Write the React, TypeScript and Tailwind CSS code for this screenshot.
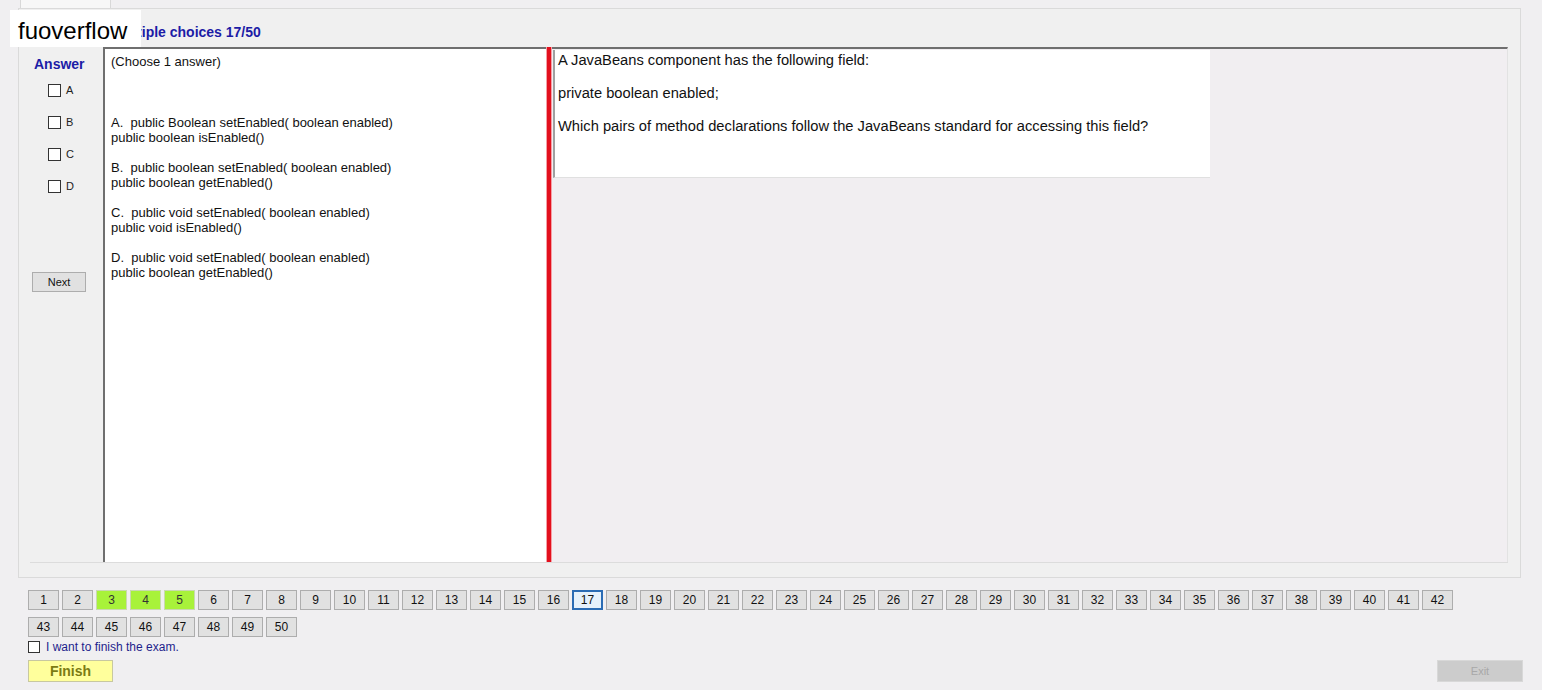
import React from "react";

const greens = [3, 4, 5];
const current = 17;

const options = [
  ["A.  public Boolean setEnabled( boolean enabled)", "public boolean isEnabled()"],
  ["B.  public boolean setEnabled( boolean enabled)", "public boolean getEnabled()"],
  ["C.  public void setEnabled( boolean enabled)", "public void isEnabled()"],
  ["D.  public void setEnabled( boolean enabled)", "public boolean getEnabled()"],
];

const QButton = ({ n }: { n: number }) => {
  let cls = "bg-[#e1e1e1] border-[#adadad] text-[#111]";
  if (greens.includes(n)) cls = "bg-[#a8f23a] border-[#c9d9b0] text-[#333]";
  if (n === current) cls = "bg-[#e5f1fb] border-[#2a6cb4] border-2 text-[#111]";
  return (
    <div className={`w-[31px] h-[20px] flex items-center justify-center border text-[12px] ${cls}`}>
      {n}
    </div>
  );
};

export default function App() {
  return (
    <div className="relative w-full h-[690px] bg-[#f0eff1] overflow-hidden text-[#111]" style={{ fontFamily: '"Liberation Sans", Arial, sans-serif' }}>
      {/* tab strip */}
      <div className="h-[8px] flex">
        <div className="ml-[20px] w-[91px] h-[8px] border-x border-[#d8d8d8] bg-[#f7f7f7]" />
      </div>

      {/* main panel */}
      <div className="ml-[18px] mr-[21px] h-[570px] border border-[#dadada] bg-[#f0f0f0] flex flex-col">
        <div className="h-[38px] pl-[94px] pt-[13px] text-[14px] font-bold text-[#1c1ca6]">Multiple choices 17/50</div>
        <div className="ml-[11px] mr-[12px] h-[516px] flex border-b border-[#dcdcdc]">
          {/* answer column */}
          <div className="w-[73px] flex flex-col pt-[7px]">
            <div className="ml-[4px] text-[14px] font-bold text-[#1c1ca6]">Answer</div>
            <div className="flex flex-col gap-[19px] mt-[9px] ml-[18px]">
              {["A", "B", "C", "D"].map((l) => (
                <div key={l} className="flex items-center gap-[5px] h-[13px]">
                  <div className="w-[13px] h-[13px] border border-[#333] bg-white" />
                  <span className="text-[11px] text-[#222]">{l}</span>
                </div>
              ))}
            </div>
            <div className="mt-[79px] ml-[2px] w-[54px] h-[20px] border border-[#adadad] bg-[#e1e1e1] flex items-center justify-center text-[11px]">
              Next
            </div>
          </div>

          {/* options panel */}
          <div className="w-[443px] bg-white border-l-2 border-t-2 border-[#6f6f6f] pl-[6px] pt-[5px] text-[13px] leading-[15px]">
            <div>(Choose 1 answer)</div>
            <div className="mt-[46px] flex flex-col gap-[15px]">
              {options.map((o) => (
                <div key={o[0]}>
                  <div className="whitespace-pre">{o[0]}</div>
                  <div>{o[1]}</div>
                </div>
              ))}
            </div>
          </div>

          {/* splitter */}
          <div className="w-[6px] bg-[#e3101d] border-x border-[#f4a0a6]" />

          {/* question area */}
          <div className="flex-1 border-t-2 border-[#6f6f6f] bg-[#f1eef1] border-r border-r-[#e2e2e2] pl-[1px] pt-[1px]">
            <div className="w-[657px] h-[128px] bg-white border-l-2 border-[#a0a0a0] border-b border-b-[#e0e0e0] pl-[3px] pt-[2px] text-[14.7px] leading-[17px] flex flex-col gap-[16px]">
              <div>A JavaBeans component has the following field:</div>
              <div>private boolean enabled;</div>
              <div>Which pairs of method declarations follow the JavaBeans standard for accessing this field?</div>
            </div>
          </div>
        </div>
      </div>

      {/* question navigation */}
      <div className="ml-[28px] mt-[12px] w-[1430px] flex flex-wrap gap-x-[3px] gap-y-[7px]">
        {Array.from({ length: 50 }, (_, i) => (
          <QButton key={i} n={i + 1} />
        ))}
      </div>

      <div className="ml-[28px] mt-[3px] flex items-center gap-[6px] h-[14px]">
        <div className="w-[12px] h-[12px] border border-[#333] bg-white" />
        <span className="text-[12px] text-[#1e1e8c]">I want to finish the exam.</span>
      </div>

      <div className="mt-[6px] ml-[28px] mr-[19px] flex justify-between">
        <div className="w-[85px] h-[22px] bg-[#ffff9c] border border-[#c8c8a0] flex items-center justify-center text-[14px] font-bold text-[#7b7b14]">
          Finish
        </div>
        <div className="w-[86px] h-[22px] bg-[#cccccc] border border-[#d8d8d8] flex items-center justify-center text-[11px] text-[#a8a8a8]">
          Exit
        </div>
      </div>

      {/* watermark */}
      <div className="absolute left-[10px] top-[10px] w-[131px] h-[37px] bg-white flex items-center pl-[8px] pt-[4px] text-[24px] text-black">
        fuoverflow
      </div>
    </div>
  );
}
